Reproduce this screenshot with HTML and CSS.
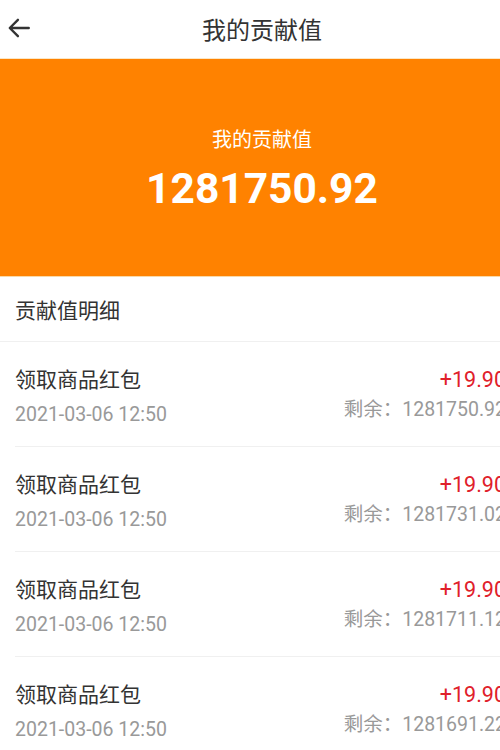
FILE: index.html
```html
<!DOCTYPE html>
<html lang="zh">
<head>
<meta charset="utf-8">
<link rel="stylesheet" href="styles.css">
</head>
<body>
<div class="viewport">
<div class="page">
  <header class="topbar">
    <svg class="back" viewBox="0 0 24 24" width="26" height="26"><path d="M21 12H4M11 4.5L3.5 12 11 19.5" fill="none" stroke="#333" stroke-width="2.2" stroke-linecap="round" stroke-linejoin="round"/></svg>
    <h1 class="title">我的贡献值</h1>
  </header>
  <section class="hero">
    <div class="hero-label">我的贡献值</div>
    <div class="hero-value">1281750.92</div>
  </section>
  <div class="section-head">贡献值明细</div>
  <ul class="list">
    <li class="item">
      <div class="left"><div class="name">领取商品红包</div><div class="date">2021-03-06 12:50</div></div>
      <div class="right"><div class="amount">+19.90</div><div class="rest">剩余：1281750.92</div></div>
    </li>
    <li class="item">
      <div class="left"><div class="name">领取商品红包</div><div class="date">2021-03-06 12:50</div></div>
      <div class="right"><div class="amount">+19.90</div><div class="rest">剩余：1281731.02</div></div>
    </li>
    <li class="item">
      <div class="left"><div class="name">领取商品红包</div><div class="date">2021-03-06 12:50</div></div>
      <div class="right"><div class="amount">+19.90</div><div class="rest">剩余：1281711.12</div></div>
    </li>
    <li class="item">
      <div class="left"><div class="name">领取商品红包</div><div class="date">2021-03-06 12:50</div></div>
      <div class="right"><div class="amount">+19.90</div><div class="rest">剩余：1281691.22</div></div>
    </li>
  </ul>
</div>
</div>
</body>
</html>
```
FILE: styles.css
```css
html, body {
  margin: 0;
  padding: 0;
  background: #fff;
  overflow: hidden;
}
body {
  font-family: Roboto, "Noto Sans CJK SC", sans-serif;
  color: #333;
}
.viewport {
  width: 500px;
  height: 750px;
  overflow: hidden;
}
.page {
  width: 524px;
}
.topbar {
  height: 59px;
  display: flex;
  align-items: center;
  justify-content: center;
  position: relative;
  border-bottom: 1px solid #fbe7c6;
  box-sizing: border-box;
  padding-bottom: 2px;
}
.back {
  position: absolute;
  left: 6px;
  top: 15px;
}
.title {
  margin: 0;
  font-size: 24px;
  font-weight: 400;
  color: #333;
}
.hero {
  height: 218px;
  background: #ff8200;
  display: flex;
  flex-direction: column;
  align-items: center;
  color: #fff;
  box-sizing: border-box;
  padding-top: 66px;
  border-bottom: 1px solid #f9d9a8;
}
.hero-label {
  font-size: 20px;
  line-height: 30px;
}
.hero-value {
  font-size: 42.5px;
  font-weight: 700;
  line-height: 50px;
  margin-top: 9px;
}
.section-head {
  height: 65px;
  box-sizing: border-box;
  border-bottom: 1px solid #f0f0f0;
  padding-left: 15px;
  display: flex;
  align-items: center;
  font-size: 21px;
  color: #333;
}
.list {
  list-style: none;
  margin: 0;
  padding: 0;
}
.item {
  height: 105px;
  margin-left: 15px;
  padding-right: 18px;
  border-bottom: 1px solid #f0f0f0;
  box-sizing: border-box;
  display: flex;
  justify-content: space-between;
  align-items: flex-start;
  padding-top: 22px;
}
.name {
  font-size: 21px;
  line-height: 32px;
  color: #333;
}
.date {
  font-size: 19.5px;
  line-height: 28px;
  margin-top: 5px;
  color: #999;
}
.right {
  text-align: right;
}
.amount {
  font-size: 21.5px;
  line-height: 32px;
  color: #e0202a;
}
.rest {
  font-size: 19.5px;
  line-height: 28px;
  color: #999;
}
```
